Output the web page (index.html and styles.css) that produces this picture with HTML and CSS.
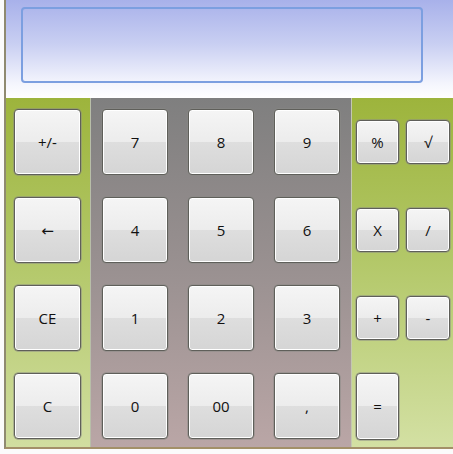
FILE: index.html
```html
<!DOCTYPE html>
<html>
<head>
<meta charset="utf-8">
<link rel="stylesheet" href="styles.css">
</head>
<body>
<div class="app">
  <div class="frame">
    <div class="display">
      <div class="screen"></div>
    </div>
    <div class="keypad">
      <div class="col col-left">
        <button class="key">+/-</button>
        <button class="key">&larr;</button>
        <button class="key">CE</button>
        <button class="key">C</button>
      </div>
      <div class="col col-mid">
        <button class="key">7</button>
        <button class="key">8</button>
        <button class="key">9</button>
        <button class="key">4</button>
        <button class="key">5</button>
        <button class="key">6</button>
        <button class="key">1</button>
        <button class="key">2</button>
        <button class="key">3</button>
        <button class="key">0</button>
        <button class="key">00</button>
        <button class="key">,</button>
      </div>
      <div class="col col-right">
        <button class="key small">%</button>
        <button class="key small">&radic;</button>
        <button class="key small">X</button>
        <button class="key small">/</button>
        <button class="key small">+</button>
        <button class="key small">-</button>
        <button class="key tall">=</button>
      </div>
    </div>
  </div>
</div>
</body>
</html>
```

FILE: styles.css
```css
html, body {
  margin: 0;
  padding: 0;
  background: #ffffff;
}
.app {
  width: 453px;
  height: 454px;
  overflow: hidden;
  background: #fbfbfb;
}
.frame {
  margin-left: 4px;
  border-left: 2px solid #8f8a70;
  border-bottom: 2px solid #a39068;
  height: 447px;
  display: flex;
  flex-direction: column;
}
.display {
  height: 98px;
  box-sizing: border-box;
  padding: 7px 0 0 15px;
  background: linear-gradient(to bottom, #a8b1ea 0%, #c9cff2 45%, #f4f5fd 85%, #ffffff 100%);
}
.screen {
  width: 402px;
  height: 76px;
  box-sizing: border-box;
  border: 2px solid #7c9fe0;
  border-radius: 4px;
  background: transparent;
}
.keypad {
  flex: 1;
  display: flex;
}
.col {
  box-sizing: border-box;
  display: grid;
  grid-auto-rows: 66px;
  row-gap: 22px;
  align-items: center;
  padding-top: 11px;
}
.col-left {
  width: 85px;
  padding-left: 8px;
  grid-template-columns: 67px;
  background: linear-gradient(to bottom, #9db43c 0%, #b2c767 45%, #d1dea0 100%);
  border-right: 1px solid #b8bea8;
}
.col-mid {
  width: 260px;
  padding-left: 11px;
  grid-template-columns: repeat(3, 66px);
  column-gap: 20px;
  background: linear-gradient(to bottom, #7f7f7f 0%, #9a9191 50%, #baa6a6 100%);
}
.col-right {
  flex: 1;
  padding-left: 4px;
  grid-template-columns: 43px 44px;
  column-gap: 7px;
  background: linear-gradient(to bottom, #9db43c 0%, #b2c767 45%, #d3e0a3 100%);
  border-left: 1px solid #c4c8b0;
}
.key {
  box-sizing: border-box;
  height: 66px;
  margin: 0;
  padding: 0;
  border: 1px solid #5f5f5a;
  border-radius: 4px;
  box-shadow: inset 0 0 0 1px #ffffff, 0 0 0 0.5px #8a8a85;
  background: linear-gradient(to bottom, #f5f5f5 0%, #ececec 50%, #dedede 50%, #d5d5d5 100%);
  font-family: "Open Sans", "DejaVu Sans", sans-serif;
  font-size: 15px;
  color: #111111;
  text-align: center;
  line-height: 1;
}
.key.small {
  height: 44px;
}
.key.tall {
  height: 67px;
}
```
